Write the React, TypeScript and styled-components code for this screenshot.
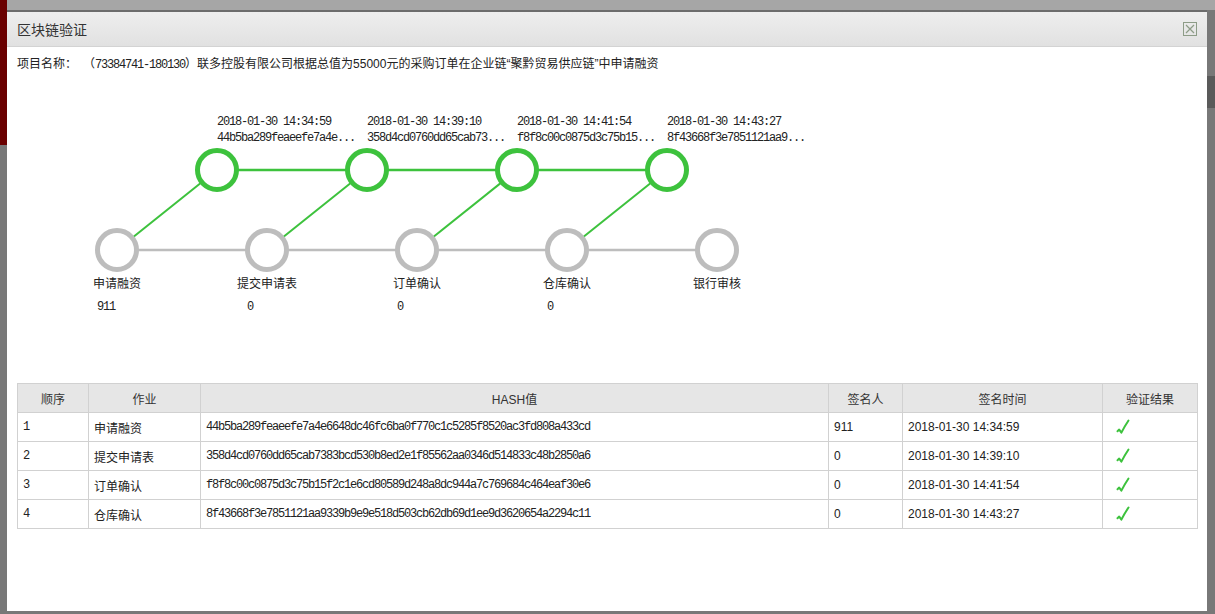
import React from "react";
import styled, { createGlobalStyle } from "styled-components";

const GlobalStyle = createGlobalStyle`
  html, body {
    margin: 0;
    padding: 0;
  }
  body {
    font-family: "Liberation Sans", "Noto Sans CJK SC", sans-serif;
    font-size: 12px;
    color: #222;
  }
`;

type Node = {
  label: string;
  value?: string;
  time?: string;
  hash?: string;
};

const nodes: Node[] = [
  { label: "申请融资", value: "911", time: "2018-01-30 14:34:59", hash: "44b5ba289feaeefe7a4e6648dc46fc6ba0f770c1c5285f8520ac3fd808a433cd" },
  { label: "提交申请表", value: "0", time: "2018-01-30 14:39:10", hash: "358d4cd0760dd65cab7383bcd530b8ed2e1f85562aa0346d514833c48b2850a6" },
  { label: "订单确认", value: "0", time: "2018-01-30 14:41:54", hash: "f8f8c00c0875d3c75b15f2c1e6cd80589d248a8dc944a7c769684c464eaf30e6" },
  { label: "仓库确认", value: "0", time: "2018-01-30 14:43:27", hash: "8f43668f3e7851121aa9339b9e9e518d503cb62db69d1ee9d3620654a2294c11" },
  { label: "银行审核" },
];

const signers = ["911", "0", "0", "0"];

const GREEN = "#3dc23d";
const GRAY = "#bdbdbd";
const MONO = '"Liberation Mono", monospace';

const Backdrop = styled.div`
  width: 1215px;
  height: 614px;
  box-sizing: border-box;
  overflow: hidden;
  padding: 10px 8px 3px 7px;
  background:
    linear-gradient(#6a0000, #6a0000) 0 0 / 7px 145px no-repeat,
    linear-gradient(#a6a6a6, #a6a6a6) 0 0 / 100% 10px no-repeat,
    linear-gradient(#5a5a5a, #5a5a5a) 100% 76px / 8px 32px no-repeat,
    #787878;
`;

const Dialog = styled.div`
  width: 1200px;
  height: 601px;
  display: flex;
  flex-direction: column;
  background: #fff;
  border-top: 2px solid #6c6c6c;
  box-sizing: border-box;
`;

const TitleBar = styled.div`
  height: 34px;
  flex: none;
  display: flex;
  align-items: center;
  justify-content: space-between;
  padding: 0 10px;
  background: linear-gradient(#eeeeee, #e1e1e1);
  border-bottom: 1px solid #d3d3d3;
`;

const Title = styled.span`
  font-size: 14px;
  color: #333;
`;

const CloseBox = styled.span`
  width: 12px;
  height: 12px;
  border: 1px solid #8d9c87;
  display: flex;
  align-items: center;
  justify-content: center;
`;

const Body = styled.div`
  flex: 1;
  padding: 0 10px;
`;

const ProjectLine = styled.div`
  margin-top: 8px;
  height: 18px;
  line-height: 18px;
  display: flex;
  white-space: nowrap;
  color: #222;
`;

const ProjectLabel = styled.span`
  margin-right: 6px;
`;

const Mono = styled.span`
  font-family: ${MONO};
  font-size: 12px;
  letter-spacing: -1.2px;
`;

const Diagram = styled.svg`
  display: block;
  width: 800px;
  height: 300px;
`;

const Table = styled.table`
  margin-top: 10px;
  width: 1180px;
  border-collapse: collapse;
  table-layout: fixed;
`;

const Th = styled.th`
  height: 28px;
  padding: 0;
  background: #e6e6e6;
  border: 1px solid #d1d1d1;
  font-weight: normal;
  font-size: 12px;
  color: #333;
  text-align: center;
`;

const Td = styled.td<{ $mono?: boolean }>`
  height: 28px;
  padding: 0 5px;
  border: 1px solid #d1d1d1;
  color: #222;
  white-space: nowrap;
  overflow: hidden;
  font-family: ${(p) => (p.$mono ? MONO : "inherit")};
  font-size: 12px;
  letter-spacing: ${(p) => (p.$mono ? "-1.2px" : "normal")};
`;

const Check = styled.svg`
  display: block;
  margin-left: 8px;
`;

const CheckMark = () => (
  <Check width="14" height="16" viewBox="0 0 14 16">
    <path
      d="M1.5 12.2 L3.2 10.6 L5.4 13.6 Q8.5 7.5 12.5 1.5"
      fill="none"
      stroke={GREEN}
      strokeWidth="2"
      strokeLinejoin="round"
      strokeLinecap="round"
    />
  </Check>
);

const ChainDiagram = () => {
  const step = 150;
  const bottomY = 177;
  const topY = 97;
  const bx = (i: number) => 100 + i * step;
  const tx = (i: number) => 200 + i * step;
  const blocks = nodes.filter((n) => n.hash);

  return (
    <Diagram viewBox="0 0 800 300">
      <line x1={bx(0)} y1={bottomY} x2={bx(nodes.length - 1)} y2={bottomY} stroke={GRAY} strokeWidth="2.5" />
      <line x1={tx(0)} y1={topY} x2={tx(blocks.length - 1)} y2={topY} stroke={GREEN} strokeWidth="2.5" />
      {blocks.map((_, i) => (
        <line key={"d" + i} x1={bx(i)} y1={bottomY} x2={tx(i)} y2={topY} stroke={GREEN} strokeWidth="2" />
      ))}
      {nodes.map((n, i) => (
        <g key={"b" + i}>
          <circle cx={bx(i)} cy={bottomY} r="19.5" fill="#fff" stroke={GRAY} strokeWidth="5" />
          <text x={bx(i)} y={215} textAnchor="middle" fontSize="12" fill="#222" fontFamily='"Noto Sans CJK SC", sans-serif'>
            {n.label}
          </text>
          {n.value && (
            <text x={bx(i) - 20} y={237} fontSize="12" letterSpacing="-1.2" fill="#222" fontFamily={MONO}>
              {n.value}
            </text>
          )}
        </g>
      ))}
      {blocks.map((n, i) => (
        <g key={"t" + i}>
          <circle cx={tx(i)} cy={topY} r="19.5" fill="#fff" stroke={GREEN} strokeWidth="5" />
          <text x={tx(i)} y={52} fontSize="12" letterSpacing="-1.2" fill="#222" fontFamily={MONO}>
            {n.time}
          </text>
          <text x={tx(i)} y={68} fontSize="12" letterSpacing="-1.2" fill="#222" fontFamily={MONO}>
            {n.hash!.slice(0, 20) + "..."}
          </text>
        </g>
      ))}
    </Diagram>
  );
};

const App = () => {
  const rows = nodes.filter((n) => n.hash);
  return (
    <>
      <GlobalStyle />
      <Backdrop>
        <Dialog>
          <TitleBar>
            <Title>区块链验证</Title>
            <CloseBox>
              <svg width="10" height="10" viewBox="0 0 10 10">
                <path d="M1 1 L9 9 M9 1 L1 9" stroke="#8d9c87" strokeWidth="1.2" />
              </svg>
            </CloseBox>
          </TitleBar>
          <Body>
            <ProjectLine>
              <ProjectLabel>项目名称：</ProjectLabel>
              <span>
                （<Mono>73384741-180130</Mono>）联多控股有限公司根据总值为55000元的采购订单在企业链“聚黔贸易供应链”中申请融资
              </span>
            </ProjectLine>
            <ChainDiagram />
            <Table>
              <colgroup>
                <col style={{ width: 71 }} />
                <col style={{ width: 112 }} />
                <col style={{ width: 628 }} />
                <col style={{ width: 74 }} />
                <col style={{ width: 200 }} />
                <col style={{ width: 95 }} />
              </colgroup>
              <thead>
                <tr>
                  <Th>顺序</Th>
                  <Th>作业</Th>
                  <Th>HASH值</Th>
                  <Th>签名人</Th>
                  <Th>签名时间</Th>
                  <Th>验证结果</Th>
                </tr>
              </thead>
              <tbody>
                {rows.map((r, i) => (
                  <tr key={i}>
                    <Td $mono>{i + 1}</Td>
                    <Td>{r.label}</Td>
                    <Td $mono>{r.hash}</Td>
                    <Td>{signers[i]}</Td>
                    <Td>{r.time}</Td>
                    <Td>
                      <CheckMark />
                    </Td>
                  </tr>
                ))}
              </tbody>
            </Table>
          </Body>
        </Dialog>
      </Backdrop>
    </>
  );
};

export default App;
